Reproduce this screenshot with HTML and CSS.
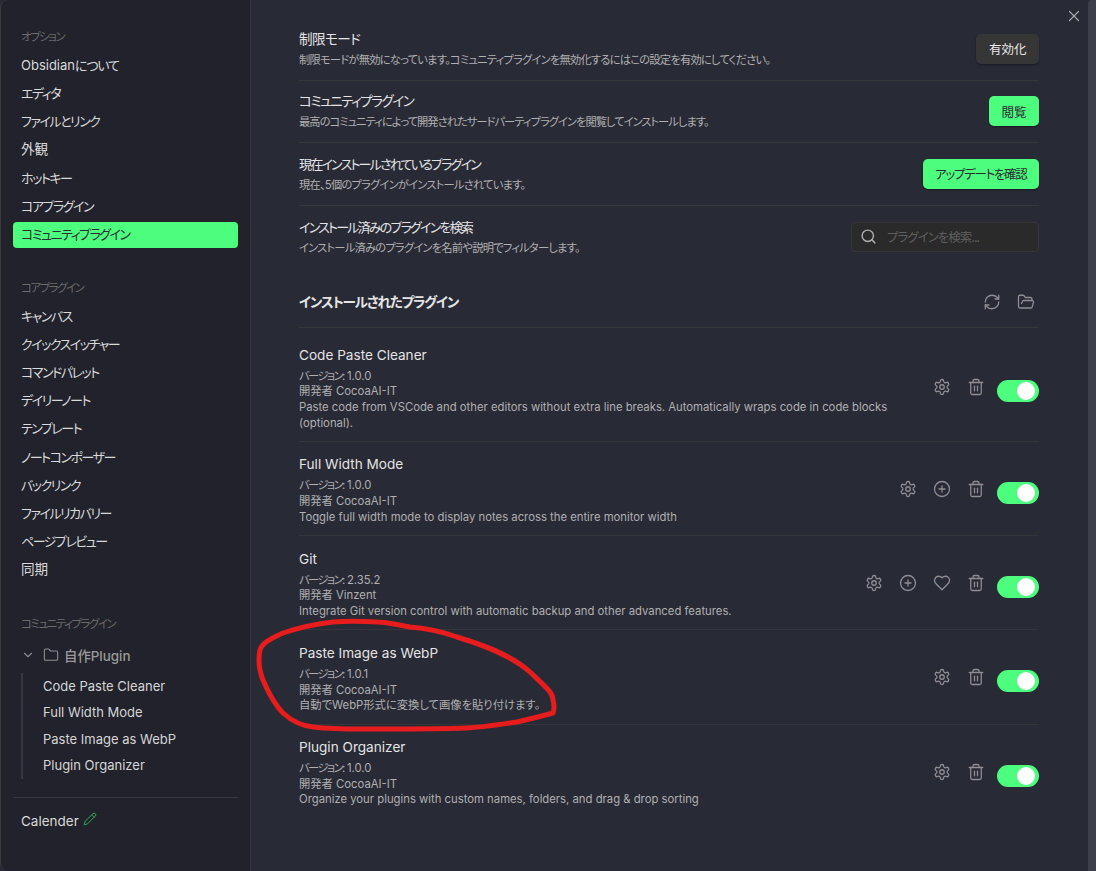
FILE: index.html
```html
<!DOCTYPE html>
<html lang="ja">
<head>
<meta charset="utf-8">
<title>設定</title>
<link rel="stylesheet" href="styles.css">
</head>
<body>
<svg class="defs" width="0" height="0" aria-hidden="true">
  <symbol id="i-gear" viewBox="0 0 24 24"><path d="M12.22 2h-.44a2 2 0 0 0-2 2v.18a2 2 0 0 1-1 1.73l-.43.25a2 2 0 0 1-2 0l-.15-.08a2 2 0 0 0-2.73.73l-.22.38a2 2 0 0 0 .73 2.73l.15.1a2 2 0 0 1 1 1.72v.51a2 2 0 0 1-1 1.74l-.15.09a2 2 0 0 0-.73 2.73l.22.38a2 2 0 0 0 2.73.73l.15-.08a2 2 0 0 1 2 0l.43.25a2 2 0 0 1 1 1.73V20a2 2 0 0 0 2 2h.44a2 2 0 0 0 2-2v-.18a2 2 0 0 1 1-1.73l.43-.25a2 2 0 0 1 2 0l.15.08a2 2 0 0 0 2.73-.73l.22-.39a2 2 0 0 0-.73-2.73l-.15-.08a2 2 0 0 1-1-1.74v-.5a2 2 0 0 1 1-1.74l.15-.09a2 2 0 0 0 .73-2.73l-.22-.38a2 2 0 0 0-2.73-.73l-.15.08a2 2 0 0 1-2 0l-.43-.25a2 2 0 0 1-1-1.73V4a2 2 0 0 0-2-2z"/><circle cx="12" cy="12" r="3"/></symbol>
  <symbol id="i-trash" viewBox="0 0 24 24"><path d="M3 6h18"/><path d="M19 6v14c0 1-1 2-2 2H7c-1 0-2-1-2-2V6"/><path d="M8 6V4c0-1 1-2 2-2h4c1 0 2 1 2 2v2"/><path d="M10 11v6"/><path d="M14 11v6"/></symbol>
  <symbol id="i-plus" viewBox="0 0 24 24"><circle cx="12" cy="12" r="10"/><path d="M8 12h8"/><path d="M12 8v8"/></symbol>
  <symbol id="i-heart" viewBox="0 0 24 24"><path d="M19 14c1.49-1.46 3-3.21 3-5.5A5.5 5.5 0 0 0 16.5 3c-1.76 0-3 .5-4.5 2-1.5-1.5-2.74-2-4.5-2A5.5 5.5 0 0 0 2 8.5c0 2.3 1.5 4.05 3 5.5l7 7Z"/></symbol>
  <symbol id="i-refresh" viewBox="0 0 24 24"><path d="M3 12a9 9 0 0 1 9-9 9.75 9.75 0 0 1 6.74 2.74L21 8"/><path d="M21 3v5h-5"/><path d="M21 12a9 9 0 0 1-9 9 9.75 9.75 0 0 1-6.74-2.74L3 16"/><path d="M8 16H3v5"/></symbol>
  <symbol id="i-folder-open" viewBox="0 0 24 24"><path d="m6 14 1.45-2.9A2 2 0 0 1 9.24 10H20a2 2 0 0 1 1.94 2.5l-1.55 6a2 2 0 0 1-1.94 1.5H4a2 2 0 0 1-2-2V5c0-1.1.9-2 2-2h3.93a2 2 0 0 1 1.66.9l.82 1.2a2 2 0 0 0 1.66.9H18a2 2 0 0 1 2 2v2"/></symbol>
  <symbol id="i-folder" viewBox="0 0 24 24"><path d="M4 20h16a2 2 0 0 0 2-2V8a2 2 0 0 0-2-2h-7.93a2 2 0 0 1-1.66-.9l-.82-1.2A2 2 0 0 0 7.93 3H4a2 2 0 0 0-2 2v13c0 1.1.9 2 2 2Z"/></symbol>
  <symbol id="i-search" viewBox="0 0 24 24"><circle cx="11" cy="11" r="8"/><path d="m21 21-4.3-4.3"/></symbol>
  <symbol id="i-x" viewBox="0 0 24 24"><path d="M18 6 6 18"/><path d="m6 6 12 12"/></symbol>
  <symbol id="i-chevron" viewBox="0 0 24 24"><path d="m6 9 6 6 6-6"/></symbol>
  <symbol id="i-pencil" viewBox="0 0 24 24"><path d="M17 3a2.85 2.83 0 1 1 4 4L7.5 20.5 2 22l1.5-5.5Z"/><path d="m15 5 4 4"/></symbol>
</svg>

<div class="app">
  <nav class="sidebar">
    <div class="nav-head first">オプション</div>
    <div class="nav-item small">Obsidian<span class="kana-s">について</span></div>
    <div class="nav-item kana">エディタ</div>
    <div class="nav-item kana">ファイルとリンク</div>
    <div class="nav-item">外観</div>
    <div class="nav-item kana">ホットキー</div>
    <div class="nav-item kana">コアプラグイン</div>
    <div class="nav-item kana active">コミュニティプラグイン</div>

    <div class="nav-head">コアプラグイン</div>
    <div class="nav-item kana">キャンバス</div>
    <div class="nav-item kana">クイックスイッチャー</div>
    <div class="nav-item kana">コマンドパレット</div>
    <div class="nav-item kana">デイリーノート</div>
    <div class="nav-item kana">テンプレート</div>
    <div class="nav-item kana">ノートコンポーザー</div>
    <div class="nav-item kana">バックリンク</div>
    <div class="nav-item kana">ファイルリカバリー</div>
    <div class="nav-item kana">ページプレビュー</div>
    <div class="nav-item">同期</div>

    <div class="nav-head third">コミュニティプラグイン</div>
    <div class="folder">
      <svg class="ico chev"><use href="#i-chevron"/></svg>
      <svg class="ico fold"><use href="#i-folder"/></svg>
      <span>自作Plugin</span>
    </div>
    <div class="tree">
      <div class="tree-item">Code Paste Cleaner</div>
      <div class="tree-item">Full Width Mode</div>
      <div class="tree-item">Paste Image as WebP</div>
      <div class="tree-item">Plugin Organizer</div>
    </div>
    <div class="nav-foot">
      <span>Calender</span>
      <svg class="ico pencil"><use href="#i-pencil"/></svg>
    </div>
  </nav>

  <main class="content">
    <section class="setting">
      <div class="info">
        <div class="name tight-s">制限モード</div>
        <div class="desc kana-d">制限モードが無効になっています。コミュニティプラグインを無効化するにはこの設定を有効にしてください。</div>
      </div>
      <button class="btn">有効化</button>
    </section>
    <section class="setting">
      <div class="info">
        <div class="name tight-m">コミュニティプラグイン</div>
        <div class="desc kana-d wide">最高のコミュニティによって開発されたサードパーティプラグインを閲覧してインストールします。</div>
      </div>
      <button class="btn cta">閲覧</button>
    </section>
    <section class="setting">
      <div class="info">
        <div class="name tight-l">現在インストールされているプラグイン</div>
        <div class="desc kana-d">現在、5個のプラグインがインストールされています。</div>
      </div>
      <button class="btn cta update">アップデートを確認</button>
    </section>
    <section class="setting plain">
      <div class="info">
        <div class="name tight-l">インストール済みのプラグインを検索</div>
        <div class="desc kana-d">インストール済みのプラグインを名前や説明でフィルターします。</div>
      </div>
      <div class="search">
        <svg class="ico s-ico"><use href="#i-search"/></svg>
        <span>プラグインを検索...</span>
      </div>
    </section>

    <section class="heading">
      <h2>インストールされたプラグイン</h2>
      <div class="heading-icons">
        <svg class="ico act"><use href="#i-refresh"/></svg>
        <svg class="ico act"><use href="#i-folder-open"/></svg>
      </div>
    </section>

    <section class="plugin first">
      <div class="info">
        <div class="name">Code Paste Cleaner</div>
        <div class="desc"><span class="ver">バージョン:</span> 1.0.0<br>開発者 CocoaAI-IT<br>Paste code from VSCode and other editors without extra line breaks. Automatically wraps code in code blocks (optional).</div>
      </div>
      <div class="controls">
        <svg class="ico act"><use href="#i-gear"/></svg>
        <svg class="ico act"><use href="#i-trash"/></svg>
        <div class="toggle"></div>
      </div>
    </section>
    <section class="plugin">
      <div class="info">
        <div class="name">Full Width Mode</div>
        <div class="desc"><span class="ver">バージョン:</span> 1.0.0<br>開発者 CocoaAI-IT<br>Toggle full width mode to display notes across the entire monitor width</div>
      </div>
      <div class="controls">
        <svg class="ico act"><use href="#i-gear"/></svg>
        <svg class="ico act"><use href="#i-plus"/></svg>
        <svg class="ico act"><use href="#i-trash"/></svg>
        <div class="toggle"></div>
      </div>
    </section>
    <section class="plugin">
      <div class="info">
        <div class="name">Git</div>
        <div class="desc"><span class="ver">バージョン:</span> 2.35.2<br>開発者 Vinzent<br>Integrate Git version control with automatic backup and other advanced features.</div>
      </div>
      <div class="controls">
        <svg class="ico act"><use href="#i-gear"/></svg>
        <svg class="ico act"><use href="#i-plus"/></svg>
        <svg class="ico act"><use href="#i-heart"/></svg>
        <svg class="ico act"><use href="#i-trash"/></svg>
        <div class="toggle"></div>
      </div>
    </section>
    <section class="plugin">
      <div class="info">
        <div class="name">Paste Image as WebP</div>
        <div class="desc"><span class="ver">バージョン:</span> 1.0.1<br>開発者 CocoaAI-IT<br>自動でWebP形式に変換して画像を貼り付けます。</div>
      </div>
      <div class="controls">
        <svg class="ico act"><use href="#i-gear"/></svg>
        <svg class="ico act"><use href="#i-trash"/></svg>
        <div class="toggle"></div>
      </div>
    </section>
    <section class="plugin plain">
      <div class="info">
        <div class="name">Plugin Organizer</div>
        <div class="desc"><span class="ver">バージョン:</span> 1.0.0<br>開発者 CocoaAI-IT<br>Organize your plugins with custom names, folders, and drag &amp; drop sorting</div>
      </div>
      <div class="controls">
        <svg class="ico act"><use href="#i-gear"/></svg>
        <svg class="ico act"><use href="#i-trash"/></svg>
        <div class="toggle"></div>
      </div>
    </section>
  </main>

  <div class="scrollbar"></div>
</div>

<svg class="ico close"><use href="#i-x"/></svg>
<svg class="scribble" viewBox="0 0 1096 871" aria-hidden="true">
  <path d="M553 700C553 693 548 689 530 672C512 656 487 646 457 637C437 630 424 628 410 627C398 625 388 622 377 622C360 621 345 621 333 622C315 624 298 628 283 633C270 639 262 643 260 650C258 660 259 670 263 680C269 694 275 705 283 713C293 722 303 726 313 727C340 730 360 729 383 729C415 729 440 729 467 728C485 727 502 724 517 722C530 719 542 716 553 713C555 708 554 704 553 700"/>
</svg>
</body>
</html>
```
FILE: styles.css
```css
* { box-sizing: border-box; }
html, body { margin: 0; height: 100%; }
body {
  width: 1096px;
  height: 871px;
  overflow: hidden;
  position: relative;
  background: #282a36;
  font-family: Inter, "Noto Sans CJK JP", sans-serif;
  font-feature-settings: "palt";
  color: #dadada;
}
.defs { position: absolute; }
.ico {
  display: block;
  fill: none;
  stroke: currentColor;
  stroke-width: 2;
  stroke-linecap: round;
  stroke-linejoin: round;
  flex: none;
}
.app { display: flex; height: 871px; }

/* sidebar */
.sidebar {
  width: 251px;
  flex: none;
  background: #21222c;
  border-left: 1px solid #3a3a3f;
  border-right: 1px solid #36373f;
  border-radius: 8px 0 0 8px;
  padding: 28px 12px 0 12px;
  font-size: 13.6px;
}
.nav-head {
  font-size: 11.5px;
  letter-spacing: -1.5px;
  line-height: 18px;
  color: #6a6a6a;
  padding-left: 8px;
  margin: 31px 0 7px;
}
.nav-head.first { margin-top: 0; margin-bottom: 7px; }
.nav-head.third { margin-top: 32px; margin-bottom: 10px; }
.nav-item {
  height: 26px;
  line-height: 25px;
  margin-bottom: 2.15px;
  padding-left: 8px;
  border-radius: 4px;
  color: #dadada;
}
.nav-item.kana { font-size: 13px; letter-spacing: -1.5px; }
.nav-item.small { font-size: 13px; }
.kana-s { letter-spacing: -1.2px; }
.nav-item.active { background: #4dfd7e; color: #2a2e33; }
.folder {
  display: flex;
  align-items: center;
  height: 24px;
  padding-left: 8px;
  color: #9a9a9a;
  font-weight: 500;
  font-size: 13.4px;
}
.chev { width: 14px; height: 14px; margin-right: 8px; color: #8a8a8a; }
.fold { width: 16px; height: 16px; margin-right: 5px; color: #8f8f8f; stroke-width: 1.6; }
.tree {
  margin: 6px 0 0 8px;
  padding-left: 20px;
  border-left: 2px solid #36373f;
  height: 106px;
  font-size: 13px;
}
.tree-item { height: 26.3px; line-height: 26px; color: #d6d6d6; }
.nav-foot {
  display: flex;
  align-items: center;
  gap: 4px;
  margin-top: 18px;
  padding: 14px 0 0 8px;
  border-top: 1px solid #36373f;
  font-size: 13.5px;
  line-height: 18px;
  color: #dadada;
}
.pencil { width: 14px; height: 14px; color: #2fa855; stroke-width: 1.7; margin-top: -4px; }

/* content */
.content {
  width: 837px;
  flex: none;
  padding: 18px 49px 0 48px;
}
.setting {
  display: flex;
  align-items: center;
  justify-content: space-between;
  height: 62.5px;
  border-bottom: 1px solid #38383c;
}
.setting.plain { border-bottom: 0; }
.name { font-size: 13.6px; line-height: 20px; color: #e4e4e4; }
.name.tight-s { letter-spacing: -0.6px; }
.name.tight-m { letter-spacing: -1.5px; }
.name.tight-l { font-size: 13px; letter-spacing: -1.8px; }
.desc { font-size: 11.3px; line-height: 15.7px; color: #b0b0b0; }
.desc.kana-d { letter-spacing: -0.8px; }
.desc.kana-d.wide { letter-spacing: -1px; }
.ver { letter-spacing: -1.6px; }
.setting .desc { margin-top: 4px; }
.btn {
  height: 30px;
  padding: 0 12.5px;
  border: 0;
  border-radius: 5px;
  background: #363636;
  color: #e8e8e8;
  font: inherit;
  font-size: 12.5px;
  box-shadow: 0 1px 2px rgba(0,0,0,.4);
  flex: none;
}
.btn.cta { background: #4dfd7e; color: #2a2e33; }
.btn.update { letter-spacing: -1.3px; }
.search {
  width: 188px;
  height: 30px;
  display: flex;
  align-items: center;
  gap: 10px;
  padding-left: 8px;
  border: 1px solid #37373a;
  border-radius: 4px;
  background: #2a2a2a;
  font-size: 12.5px;
  letter-spacing: -1px;
  color: #5f5f5f;
}
.s-ico { width: 17px; height: 17px; color: #b0b0b0; }
.heading {
  display: flex;
  align-items: center;
  justify-content: space-between;
  margin-top: 9px;
  height: 51px;
  border-bottom: 1px solid #38383c;
}
.heading h2 { margin: 0; font-size: 13.6px; font-weight: 600; letter-spacing: -1.2px; color: #e4e4e4; line-height: 20px; }
.heading-icons { display: flex; gap: 16px; margin-right: 4px; }
.act { width: 18px; height: 18px; color: #8e8e94; stroke-width: 1.7; }
.plugin {
  display: flex;
  align-items: center;
  justify-content: space-between;
  gap: 24px;
  padding: 12.5px 0 9.6px;
  border-bottom: 1px solid #35363c;
}
.plugin.first { padding-top: 16.5px; }
.plugin.plain { border-bottom: 0; }
.plugin .info { flex: 1; }
.plugin .name { margin-bottom: 4px; }
.controls { display: flex; align-items: center; flex: none; margin-top: 6px; }
.controls .act { margin-right: 16px; position: relative; top: -4px; }
.controls .act:nth-last-child(2) { margin-right: 12px; }
.toggle {
  width: 42px;
  height: 22px;
  border-radius: 11px;
  background: #4dfd7e;
  position: relative;
}
.toggle::after {
  content: "";
  position: absolute;
  right: 4px;
  top: 2px;
  width: 18px;
  height: 18px;
  border-radius: 50%;
  background: #fff;
}
.scrollbar {
  width: 8px;
  flex: none;
  background: #3d3f4b;
  border-radius: 4px 0 0 0;
}

/* overlays */
.close {
  position: absolute;
  top: 7px;
  right: 13px;
  width: 18px;
  height: 18px;
  color: #a8a8a8;
  stroke-width: 1.6;
}
.scribble {
  position: absolute;
  left: 0;
  top: 0;
  width: 1096px;
  height: 871px;
  fill: none;
  stroke: #e71c1c;
  stroke-width: 5;
  stroke-linecap: round;
  stroke-linejoin: round;
  pointer-events: none;
}
```
